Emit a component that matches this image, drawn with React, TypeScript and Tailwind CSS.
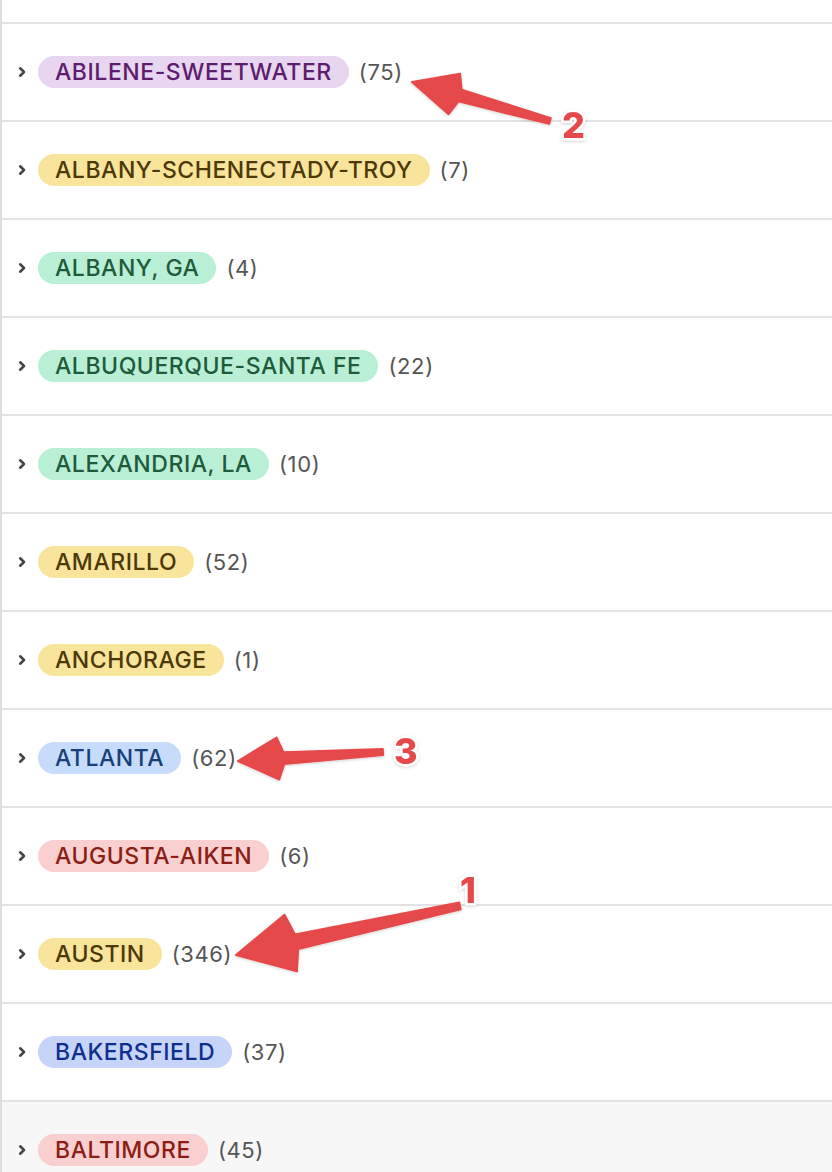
import React from 'react';

type Tone = 'purple' | 'yellow' | 'green' | 'blue' | 'red' | 'indigo';

interface Group {
  name: string;
  count: number;
  tone: Tone;
}

const toneClass: Record<Tone, string> = {
  purple: 'bg-[#e8d5f0] text-[#5b1d6c]',
  yellow: 'bg-[#f9e49c] text-[#4b3908]',
  green: 'bg-[#b9efd5] text-[#1e5b3b]',
  blue: 'bg-[#c6dcfa] text-[#193f7b]',
  red: 'bg-[#f9cfcf] text-[#8b1d14]',
  indigo: 'bg-[#c6d4f9] text-[#0f2f8d]',
};

const groups: Group[] = [
  { name: 'ABILENE-SWEETWATER', count: 75, tone: 'purple' },
  { name: 'ALBANY-SCHENECTADY-TROY', count: 7, tone: 'yellow' },
  { name: 'ALBANY, GA', count: 4, tone: 'green' },
  { name: 'ALBUQUERQUE-SANTA FE', count: 22, tone: 'green' },
  { name: 'ALEXANDRIA, LA', count: 10, tone: 'green' },
  { name: 'AMARILLO', count: 52, tone: 'yellow' },
  { name: 'ANCHORAGE', count: 1, tone: 'yellow' },
  { name: 'ATLANTA', count: 62, tone: 'blue' },
  { name: 'AUGUSTA-AIKEN', count: 6, tone: 'red' },
  { name: 'AUSTIN', count: 346, tone: 'yellow' },
  { name: 'BAKERSFIELD', count: 37, tone: 'indigo' },
  { name: 'BALTIMORE', count: 45, tone: 'red' },
];

const Chevron = () => (
  <svg width="9" height="12" viewBox="0 0 9 12" className="shrink-0">
    <path d="M2.2 2.3 L6 6 L2.2 9.7" fill="none" stroke="#454545" strokeWidth="2.6" strokeLinecap="round" strokeLinejoin="round" />
  </svg>
);

const GroupRow: React.FC<{ group: Group; last?: boolean }> = ({ group, last }) => (
  <div
    className={
      last
        ? 'flex h-[98px] shrink-0 items-center border-b-2 border-[#e2e2e2] bg-[#f7f7f7] pl-[16px]'
        : 'flex h-[98px] shrink-0 items-center border-b-2 border-[#e2e2e2] bg-white pl-[16px]'
    }
  >
    <Chevron />
    <span
      className={`ml-[11px] flex h-[32px] items-center rounded-full px-[17px] text-[23px] font-medium tracking-[0.55px] ${toneClass[group.tone]}`}
    >
      {group.name}
    </span>
    <span className="ml-[10px] text-[22px] tracking-[0.6px] text-[#555555]">({group.count})</span>
  </div>
);

type Pt = [number, number];

// tapered arrow: thin tail, wide triangular head
function arrowPoints(tail: Pt, tip: Pt, headLen: number, headW: number, tailW: number, neckW: number) {
  const dx = tip[0] - tail[0];
  const dy = tip[1] - tail[1];
  const len = Math.hypot(dx, dy);
  const ux = dx / len;
  const uy = dy / len;
  const nx = -uy;
  const ny = ux;
  const bx = tip[0] - ux * headLen;
  const by = tip[1] - uy * headLen;
  const p = (x: number, y: number) => `${x.toFixed(1)},${y.toFixed(1)}`;
  return [
    p(tail[0] + nx * tailW / 2, tail[1] + ny * tailW / 2),
    p(bx + nx * neckW / 2, by + ny * neckW / 2),
    p(bx + nx * headW / 2 + ux * 6, by + ny * headW / 2 + uy * 6),
    p(tip[0], tip[1]),
    p(bx - nx * headW / 2 + ux * 6, by - ny * headW / 2 + uy * 6),
    p(bx - nx * neckW / 2, by - ny * neckW / 2),
    p(tail[0] - nx * tailW / 2, tail[1] - ny * tailW / 2),
  ].join(' ');
}

const Callouts = () => (
  <svg className="pointer-events-none absolute left-0 top-0" width="832" height="1172">
    <defs>
      <filter id="lift" x="-20%" y="-20%" width="140%" height="140%">
        <feDropShadow dx="0" dy="1" stdDeviation="1.5" floodColor="#000" floodOpacity="0.18" />
      </filter>
    </defs>
    <g fill="#e5484a" filter="url(#lift)">
      <polygon points={arrowPoints([550, 121], [412, 82], 50, 42, 6, 12)} strokeLinejoin="round" stroke="#e5484a" strokeWidth="2" />
      <polygon points={arrowPoints([383, 752], [238, 761], 46, 42, 6, 12)} strokeLinejoin="round" stroke="#e5484a" strokeWidth="2" />
      <polygon points={arrowPoints([460, 906], [236, 955], 62, 58, 7, 15)} strokeLinejoin="round" stroke="#e5484a" strokeWidth="2" />
    </g>
    <g
      fill="#e5484a"
      stroke="#ffffff"
      strokeWidth="5"
      paintOrder="stroke"
      fontFamily="Inter, 'Liberation Sans', sans-serif"
      fontWeight="800"
      fontSize="36"
      filter="url(#lift)"
    >
      <text x="562" y="138">2</text>
      <text x="394" y="764">3</text>
      <text x="460" y="903">1</text>
    </g>
  </svg>
);

export default function App() {
  return (
    <div className="relative h-[1172px] w-[832px] overflow-hidden bg-white font-['Inter','Liberation_Sans',sans-serif]">
      <div className="flex h-full flex-col border-l-2 border-[#dedede]">
        <div className="h-[24px] shrink-0 border-b-2 border-[#e2e2e2] bg-white" />
        {groups.map((g, i) => (
          <GroupRow key={g.name} group={g} last={i === groups.length - 1} />
        ))}
      </div>
      <Callouts />
    </div>
  );
}
